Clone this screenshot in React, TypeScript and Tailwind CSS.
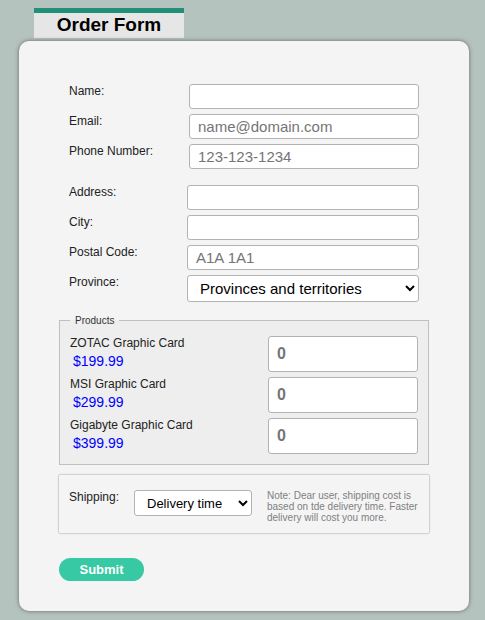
import React from "react";

const inputClass =
  "block h-[25px] w-full rounded-[3px] border border-[#b3b3b3] bg-white px-2 text-[15px] text-black placeholder:text-[#757575]";

type FieldProps = { id: string; label: string; type?: string; placeholder?: string };

function Field({ id, label, type = "text", placeholder }: FieldProps) {
  return (
    <>
      <label htmlFor={id} className="text-xs leading-[14px]">
        {label}
      </label>
      <input id={id} name={id} type={type} placeholder={placeholder} className={inputClass} />
    </>
  );
}

const products = [
  { id: "zotac", name: "ZOTAC Graphic Card", price: "$199.99" },
  { id: "msi", name: "MSI Graphic Card", price: "$299.99" },
  { id: "gigabyte", name: "Gigabyte Graphic Card", price: "$399.99" },
];

const provinces = ["Alberta", "British Columbia", "Manitoba", "Ontario", "Quebec"];

export default function App() {
  return (
    <main className="min-h-screen bg-[#b5c3bf] pt-2 pr-4 pb-[9px] pl-[19px] font-['Liberation_Sans',Arial,sans-serif] text-[#222]">
      <h1 className="ml-[15px] h-[30px] w-[150px] border-t-[5px] border-[#248f78] bg-[#e6e6e6] text-center text-[19px] leading-[23px] font-bold text-black">
        Order Form
      </h1>
      <form
        className="mt-[3px] rounded-[10px] bg-[#f4f4f4] px-10 pt-[43px] pb-[30px] shadow-[0_0_4px_#666]"
        onSubmit={(event) => event.preventDefault()}
      >
        <div className="grid grid-cols-[120px_1fr] gap-y-[5px] pr-[10px] pl-[10px]">
          <Field id="name" label="Name:" />
          <Field id="email" label="Email:" type="email" placeholder="name@domain.com" />
          <Field id="phone" label="Phone Number:" type="tel" placeholder="123-123-1234" />
        </div>

        <div className="mt-4 grid grid-cols-[118px_1fr] gap-y-[5px] pr-[10px] pl-[10px]">
          <Field id="address" label="Address:" />
          <Field id="city" label="City:" />
          <Field id="postal" label="Postal Code:" placeholder="A1A 1A1" />
          <label htmlFor="province" className="text-xs leading-[14px]">
            Province:
          </label>
          <select
            id="province"
            className="block h-[27px] w-full rounded-[3px] border border-[#b3b3b3] bg-white pl-2 text-[15px] text-black"
          >
            <option>Provinces and territories</option>
            {provinces.map((province) => (
              <option key={province}>{province}</option>
            ))}
          </select>
        </div>

        <fieldset className="mt-[13px] border border-[#c0c0c0] bg-[#eee] px-[10px] pb-[10px]">
          <legend className="px-[5px] text-[10px] leading-[11px] text-[#333]">Products</legend>
          <div className="flex flex-col gap-[5px] pt-[10px]">
            {products.map((product) => (
              <div key={product.id} className="flex justify-between">
                <label htmlFor={product.id} className="text-xs leading-[14px]">
                  {product.name}
                  <span className="block pl-[3px] text-sm leading-[22px] text-[#00f]">
                    {product.price}
                  </span>
                </label>
                <input
                  id={product.id}
                  type="number"
                  min={0}
                  placeholder="0"
                  className="h-9 w-[150px] rounded-[3px] border border-[#b3b3b3] bg-white px-2 text-base font-bold placeholder:text-[#757575]"
                />
              </div>
            ))}
          </div>
        </fieldset>

        <div className="mt-[10px] flex items-start rounded-[1px] px-[10px] pt-[15px] pb-[10px] shadow-[0_0_2px_#777]">
          <label htmlFor="shipping" className="w-[65px] shrink-0 text-xs leading-[14px]">
            Shipping:
          </label>
          <select
            id="shipping"
            className="h-[26px] w-[118px] shrink-0 rounded-[3px] border border-[#b3b3b3] bg-white pl-2 text-[13px] text-black"
          >
            <option>Delivery time</option>
            <option>Express</option>
            <option>Standard</option>
          </select>
          <p className="ml-[15px] text-[10px] leading-[11px] text-[#808080]">
            Note: Dear user, shipping cost is based on tde delivery time. Faster delivery will cost
            you more.
          </p>
        </div>

        <button
          type="submit"
          className="mt-[25px] block h-[23px] w-[85px] rounded-full bg-[#36c9a4] text-center text-[13px] leading-[23px] font-bold text-white"
        >
          Submit
        </button>
      </form>
    </main>
  );
}
